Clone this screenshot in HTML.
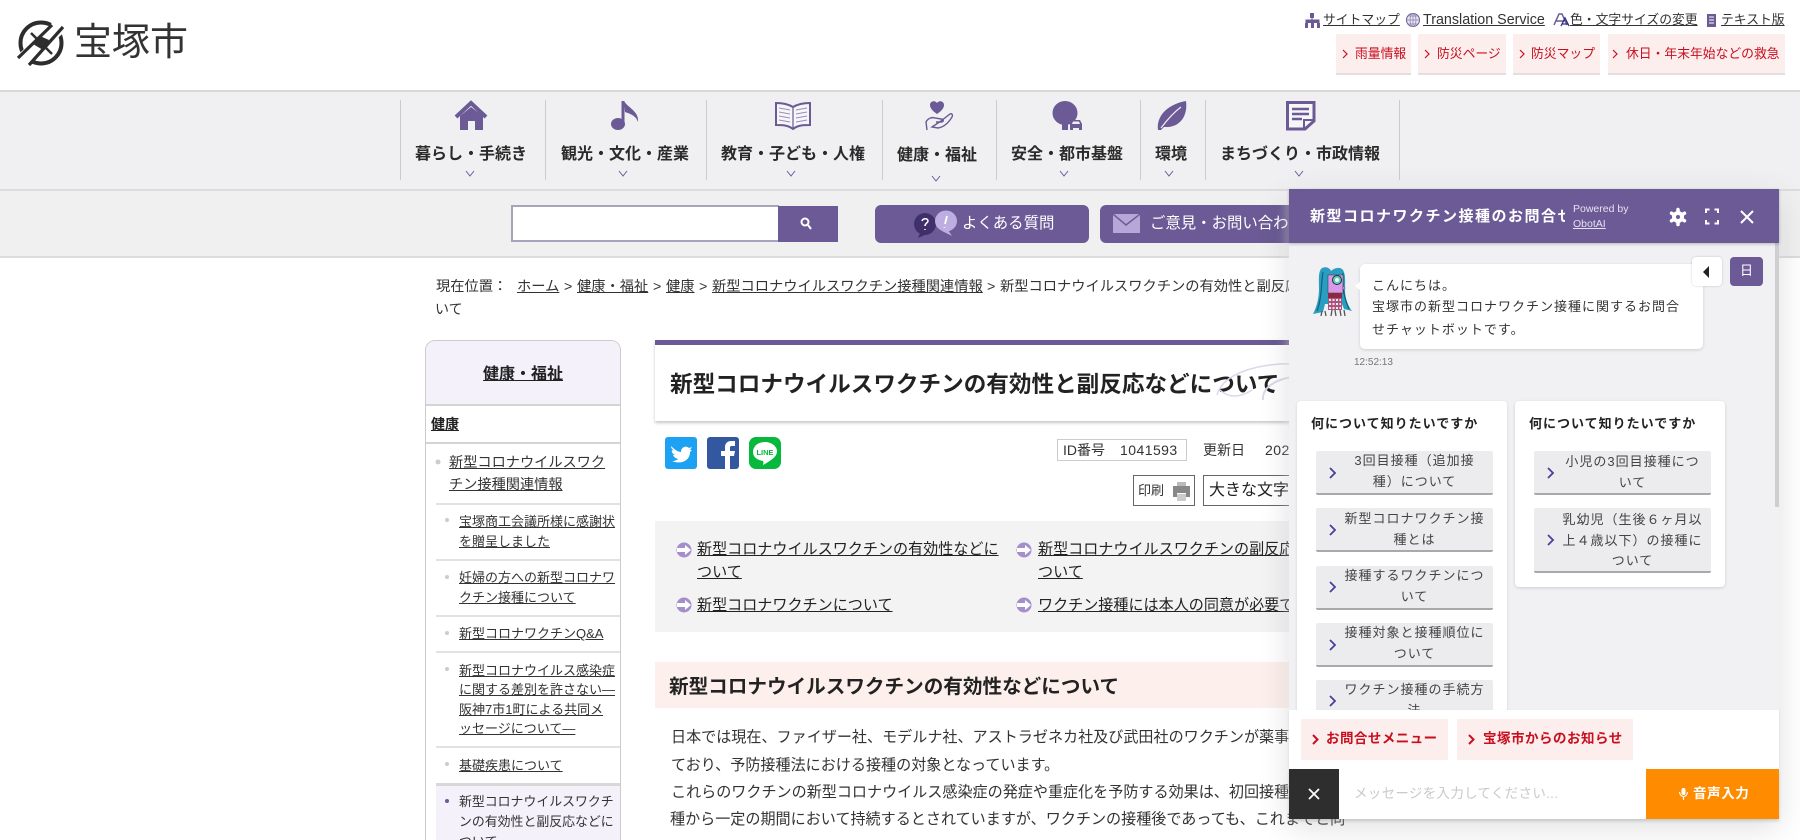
<!DOCTYPE html>
<html lang="ja"><head><meta charset="utf-8"><title>新型コロナウイルスワクチンの有効性と副反応などについて</title>
<style>
html,body{margin:0;padding:0;background:#fff}
#p{position:relative;width:1800px;height:840px;overflow:hidden;background:#fff;font-family:"Liberation Sans","Noto Sans CJK JP",sans-serif;color:#333}
#p div{position:absolute;box-sizing:border-box}
.t{position:absolute;white-space:nowrap;line-height:20px;height:20px}
a,.u{text-decoration:underline;color:inherit}
.nv{font-size:16px;font-weight:bold;color:#2a2a2a;transform:translateX(-50%)}
.rb{background:#fdeeee;border-bottom:2px solid #e4dede;top:34px;height:41px}
.rt{top:44px;font-size:12.8px;color:#c80f1e}
.tl{top:10px;font-size:12.8px;color:#333}
.s1{font-size:13px;color:#333}
.sep{background:#e2e2e2;height:2px;left:436px;width:184px}
.pb{font-size:15.08px;color:#333;left:671px}
.toc{font-size:15.08px;color:#222}
.bc{font-size:14.26px;top:277px}
.bt{background:#ececef;border-bottom:2px solid #a9a9ad;border-radius:2px}
.bx{position:absolute;text-align:center;font-size:13px;letter-spacing:1px;line-height:20.5px;width:147px;color:#444}
.hd{font-size:13px;font-weight:bold;letter-spacing:1px;color:#222;top:414px}
</style></head><body>
<div id="p">
<!-- header -->
<span class="t" style="left:74px;top:21px;font-size:38px;line-height:44px;height:44px;color:#333">宝塚市</span>
<span class="t tl u" style="left:1323px">サイトマップ</span>
<span class="t tl u" style="left:1423px;font-size:14.3px">Translation Service</span>
<span class="t tl u" style="left:1570px">色・文字サイズの変更</span>
<span class="t tl u" style="left:1721px">テキスト版</span>
<div class="rb" style="left:1336px;width:75px"></div>
<div class="rb" style="left:1418px;width:88px"></div>
<div class="rb" style="left:1513px;width:87px"></div>
<div class="rb" style="left:1608px;width:177px"></div>
<span class="t rt" style="left:1355px">雨量情報</span>
<span class="t rt" style="left:1437px">防災ページ</span>
<span class="t rt" style="left:1531px">防災マップ</span>
<span class="t rt" style="left:1626px">休日・年末年始などの救急</span>
<!-- nav -->
<div style="left:0;top:90px;width:1800px;height:101px;background:#f0f0f2;border-top:2px solid #d8d8d8;border-bottom:2px solid #dcdcdc"></div>
<div style="left:400px;top:100px;width:1px;height:80px;background:#ccc"></div>
<div style="left:545px;top:100px;width:1px;height:80px;background:#ccc"></div>
<div style="left:706px;top:100px;width:1px;height:80px;background:#ccc"></div>
<div style="left:882px;top:100px;width:1px;height:80px;background:#ccc"></div>
<div style="left:996px;top:100px;width:1px;height:80px;background:#ccc"></div>
<div style="left:1140px;top:100px;width:1px;height:80px;background:#ccc"></div>
<div style="left:1205px;top:100px;width:1px;height:80px;background:#ccc"></div>
<div style="left:1399px;top:100px;width:1px;height:80px;background:#ccc"></div>
<span class="t nv" style="left:471px;top:145px">暮らし・手続き</span>
<span class="t nv" style="left:625px;top:145px">観光・文化・産業</span>
<span class="t nv" style="left:793px;top:145px">教育・子ども・人権</span>
<span class="t nv" style="left:937px;top:146px">健康・福祉</span>
<span class="t nv" style="left:1067px;top:145px">安全・都市基盤</span>
<span class="t nv" style="left:1171px;top:145px">環境</span>
<span class="t nv" style="left:1300px;top:145px">まちづくり・市政情報</span>
<!-- search band -->
<div style="left:0;top:191px;width:1800px;height:67px;background:#f0f0f1;border-bottom:2px solid #dcdcdc"></div>
<div style="left:511px;top:205px;width:268px;height:37px;background:#fff;border:1px solid #a8a2bc;border-width:2px 0 2px 2px"></div>
<div style="left:778px;top:206px;width:60px;height:36px;background:#6b5a95"></div>
<div style="left:875px;top:205px;width:214px;height:38px;background:#6b5a95;border-radius:6px"></div>
<div style="left:1100px;top:205px;width:240px;height:38px;background:#6b5a95;border-radius:6px"></div>
<span class="t" style="left:962px;top:214px;font-size:15.4px;color:#fff">よくある質問</span>
<span class="t" style="left:1150px;top:214px;font-size:15.4px;color:#fff">ご意見・お問い合わせ</span>
<!-- breadcrumb -->
<span class="t bc" style="left:436px">現在位置：</span>
<span class="t u bc" style="left:517px">ホーム</span>
<span class="t bc" style="left:564px">&gt;</span>
<span class="t u bc" style="left:577px">健康・福祉</span>
<span class="t bc" style="left:653px">&gt;</span>
<span class="t u bc" style="left:666px">健康</span>
<span class="t bc" style="left:699px">&gt;</span>
<span class="t u bc" style="left:712px">新型コロナウイルスワクチン接種関連情報</span>
<span class="t bc" style="left:987px">&gt;</span>
<span class="t" style="left:1000px;top:277px;font-size:14.26px">新型コロナウイルスワクチンの有効性と副反応などについ</span>
<span class="t" style="left:435px;top:299px;font-size:14px">いて</span>
<!-- sidebar -->
<div style="left:425px;top:340px;width:196px;height:520px;border:1px solid #ccc;border-radius:10px 10px 0 0;background:#fff"></div>
<div style="left:426px;top:341px;width:194px;height:65px;background:#f4f1fb;border-radius:9px 9px 0 0;border-bottom:2px solid #d4d4d4"></div>
<span class="t u" style="left:483px;top:365px;font-size:16px;font-weight:bold;color:#222">健康・福祉</span>
<span class="t u" style="left:431px;top:414px;font-size:14px;font-weight:bold;color:#222">健康</span>
<div style="left:426px;top:442px;width:194px;height:2px;background:#d4d4d4"></div>
<span class="t u" style="left:449px;top:453px;font-size:14.2px">新型コロナウイルスワク</span>
<span class="t u" style="left:449px;top:475px;font-size:14.2px">チン接種関連情報</span>
<div class="sep" style="top:503px"></div>
<span class="t u s1" style="left:459px;top:512px">宝塚商工会議所様に感謝状</span>
<span class="t u s1" style="left:459px;top:532px">を贈呈しました</span>
<div class="sep" style="top:559px"></div>
<span class="t u s1" style="left:459px;top:568px">妊婦の方への新型コロナワ</span>
<span class="t u s1" style="left:459px;top:588px">クチン接種について</span>
<div class="sep" style="top:615px"></div>
<span class="t u s1" style="left:459px;top:624px">新型コロナワクチンQ&amp;A</span>
<div class="sep" style="top:651px"></div>
<span class="t u s1" style="left:459px;top:661px">新型コロナウイルス感染症</span>
<span class="t u s1" style="left:459px;top:680px">に関する差別を許さない―</span>
<span class="t u s1" style="left:459px;top:700px">阪神7市1町による共同メ</span>
<span class="t u s1" style="left:459px;top:719px">ッセージについて―</span>
<div class="sep" style="top:746px"></div>
<span class="t u s1" style="left:459px;top:756px">基礎疾患について</span>
<div class="sep" style="top:783px;height:3px;background:#d8d8d8"></div>
<div style="left:436px;top:786px;width:184px;height:60px;background:#f4f1fb"></div>
<span class="t s1" style="left:459px;top:792px;font-size:12.9px">新型コロナウイルスワクチ</span>
<span class="t s1" style="left:459px;top:812px;font-size:12.9px">ンの有効性と副反応などに</span>
<span class="t s1" style="left:459px;top:832px">ついて</span>
<!-- main title -->
<div style="left:655px;top:340px;width:650px;height:81px;background:#fff;border-top:5px solid #6b5a95;box-shadow:0 2px 3px rgba(0,0,0,.22)"></div>
<span class="t" style="left:670px;top:369px;font-size:22.6px;line-height:32px;height:32px;font-weight:bold;color:#222">新型コロナウイルスワクチンの有効性と副反応などについて</span>
<!-- meta -->
<div style="left:1057px;top:439px;width:130px;height:22px;border:1px solid #ccc"></div>
<span class="t" style="left:1063px;top:440px;font-size:14px">ID番号</span>
<span class="t" style="left:1120px;top:440px;font-size:14px;letter-spacing:.45px">1041593</span>
<span class="t" style="left:1203px;top:440px;font-size:14px">更新日</span>
<span class="t" style="left:1265px;top:440px;font-size:14px;letter-spacing:.45px">2022年</span>
<div style="left:1133px;top:475px;width:62px;height:31px;border:1px solid #666"></div>
<span class="t" style="left:1138px;top:481px;font-size:13px">印刷</span>
<div style="left:1203px;top:475px;width:120px;height:31px;border:1px solid #666"></div>
<span class="t" style="left:1209px;top:481px;font-size:16px;color:#222">大きな文字</span>
<!-- toc -->
<div style="left:655px;top:521px;width:650px;height:111px;background:#f3f3f4"></div>
<span class="t u toc" style="left:697px;top:540px">新型コロナウイルスワクチンの有効性などに</span>
<span class="t u toc" style="left:697px;top:563px">ついて</span>
<span class="t u toc" style="left:697px;top:596px">新型コロナワクチンについて</span>
<span class="t u toc" style="left:1038px;top:540px">新型コロナウイルスワクチンの副反応などに</span>
<span class="t u toc" style="left:1038px;top:563px">ついて</span>
<span class="t u toc" style="left:1038px;top:596px">ワクチン接種には本人の同意が必要です</span>
<!-- h2 -->
<div style="left:655px;top:662px;width:650px;height:46px;background:#fdf0ec"></div>
<span class="t" style="left:669px;top:674px;font-size:19.6px;line-height:26px;height:26px;font-weight:bold;color:#222">新型コロナウイルスワクチンの有効性などについて</span>
<span class="t pb" style="top:728px">日本では現在、ファイザー社、モデルナ社、アストラゼネカ社及び武田社のワクチンが薬事承認され</span>
<span class="t pb" style="top:756px">ており、予防接種法における接種の対象となっています。</span>
<span class="t pb" style="top:783px">これらのワクチンの新型コロナウイルス感染症の発症や重症化を予防する効果は、初回接種後及び追加接</span>
<span class="t pb" style="top:810px;left:670px">種から一定の期間において持続するとされていますが、ワクチンの接種後であっても、これまでと同</span>

<!-- page icons -->
<svg style="position:absolute;left:0;top:0" width="1800" height="840" viewBox="0 0 1800 840" fill="none">
<!-- logo -->
<circle cx="41" cy="43" r="20.500" stroke="#2d2d2d" stroke-width="4"/>
<path d="M20 63 L63 23" stroke="#fff" stroke-width="15"/>
<path d="M18 58 L52 25 M29 65 L63 27" stroke="#2d2d2d" stroke-width="3.200"/>
<path d="M31 33 L52 54" stroke="#2d2d2d" stroke-width="2.500"/>
<path d="M33 44 L40 36 L49 40 L43 50 Z" fill="#2d2d2d"/>
<!-- home -->
<path d="M456 117 L471 103 L486 117" stroke="#6b5a95" stroke-width="4"/>
<path d="M460 116 L471 107 L483 116 L483 130 L475 130 L475 121 L468 121 L468 130 L460 130Z" fill="#6b5a95"/>
<!-- note -->
<ellipse cx="618" cy="124" rx="7" ry="6" fill="#6b5a95"/><path d="M623 124 V101" stroke="#6b5a95" stroke-width="3"/>
<path d="M624 101 C628 108 639 111 638 122 C636 116 631 114 625 112Z" fill="#6b5a95"/>
<!-- book -->
<path d="M776 103 C782 103 788 104 793 107 C798 104 804 103 810 103 V125 C804 125 798 125 793 129 C788 125 782 125 776 125Z" stroke="#6b5a95" stroke-width="2" fill="#f6f6f8"/>
<path d="M793 107 V128" stroke="#6b5a95" stroke-width="1.200"/>
<path d="M779 108 L790 110 M779 112 L790 114 M779 116 L790 118 M779 120 L790 122 M796 110 L807 108 M796 114 L807 112 M796 118 L807 116 M796 122 L807 120" stroke="#9a8db8" stroke-width="1.100"/>
<!-- health -->
<path d="M937 114 C931 110 930 107 930 105 C930 101 935 100 937 103 C939 100 944 101 944 105 C944 107 943 110 937 114Z" fill="#6b5a95"/>
<path d="M927 130 L926 122 C928 118 932 117 935 118 L941 119 C944 119 944 122 941 122 L936 122 M941 121 L950 114 C952 113 953 115 952 117 C949 122 945 127 938 128 L932 127 Z" stroke="#6b5a95" stroke-width="1.400" fill="none"/>
<!-- tree -->
<ellipse cx="1065" cy="113" rx="12.500" ry="12" fill="#6b5a95"/><path d="M1062 120 H1068 V130 H1062Z" fill="#6b5a95"/>
<path d="M1070 130 V124 L1072 120 H1080 L1082 124 V130 H1079 V128 H1073 V130Z" fill="#6b5a95"/><path d="M1073 121.500 H1079 L1080 124 H1072Z" fill="#f0f0f2"/>
<!-- leaf -->
<path d="M1158 130 C1156 116 1168 104 1186 101 C1188 116 1180 128 1164 127 L1161 130Z" fill="#6b5a95"/>
<path d="M1161 128 C1167 120 1173 113 1181 107" stroke="#f0f0f2" stroke-width="1.200"/>
<!-- doc -->
<path d="M1287.500 102.500 H1314 V121 L1305 129 H1287.500Z" stroke="#6b5a95" stroke-width="3" fill="#f6f6f8"/>
<path d="M1304 129 V120 H1314" stroke="#6b5a95" stroke-width="2"/>
<path d="M1292 109 H1309 M1292 114 H1309 M1292 119 H1302" stroke="#6b5a95" stroke-width="2.500"/>
<!-- nav chevrons -->
<g stroke="#6b5a95" stroke-width="1"><path d="M466 171 L470 176 L474 171"/><path d="M619 171 L623 176 L627 171"/><path d="M787 171 L791 176 L795 171"/><path d="M932 176 L936 181 L940 176"/><path d="M1060 171 L1064 176 L1068 171"/><path d="M1165 171 L1169 176 L1173 171"/><path d="M1295 171 L1299 176 L1303 171"/></g>
<!-- top link icons -->
<g fill="#6b5a95"><rect x="1310" y="13" width="4" height="5"/><rect x="1305" y="23" width="3" height="5"/><rect x="1311" y="23" width="3" height="5"/><rect x="1317" y="23" width="3" height="5"/><path d="M1306 23 V20 H1319 V23 M1312 18 V23" stroke="#6b5a95"/></g>
<circle cx="1413" cy="20" r="6.500" stroke="#6b5a95" fill="#e8e6f0"/><path d="M1407 20 H1420 M1413 14 V27 M1408 16 H1418 M1408 24 H1418" stroke="#8a7cad" stroke-width=".7"/><ellipse cx="1413" cy="20" rx="3" ry="6.500" stroke="#8a7cad" stroke-width=".7"/>
<path d="M1554 25 L1559 14 L1562 14 L1567 25 M1556 21 L1565 21" stroke="#6b5a95" stroke-width="1.500"/><path d="M1561 26 L1565 18 L1569 26 M1562.500 24 H1567.500" stroke="#33307a" stroke-width="1.300"/>
<path d="M1707 14 H1716 V27 H1707Z" fill="#6b5a95"/><path d="M1709 17 H1714 M1709 20 H1714 M1709 23 H1714" stroke="#fff"/>
<!-- red chevrons -->
<g stroke="#c80f1e" stroke-width="1.200"><path d="M1343 50 L1347 54 L1343 58"/><path d="M1425 50 L1429 54 L1425 58"/><path d="M1520 50 L1524 54 L1520 58"/><path d="M1613 50 L1617 54 L1613 58"/></g>
<!-- search -->
<circle cx="805" cy="222" r="3.500" stroke="#fff" stroke-width="2"/><path d="M808 225 L811 229" stroke="#fff" stroke-width="2"/>
<!-- faq -->
<circle cx="925" cy="224" r="11" fill="#3f2f6b"/><path d="M920 233 L918 238 L925 235Z" fill="#3f2f6b"/>
<ellipse cx="946" cy="221" rx="11" ry="10.500" fill="#bcaee0"/><path d="M948 230 L952 236 L942 231Z" fill="#bcaee0"/>
<path d="M947 216 L945 224 M944.500 227 V227.800" stroke="#fff" stroke-width="1.800"/>
<path d="M922 221 C923 218 928 218 928 221 C928 223 925 223 925 226 M925 229 V230" stroke="#fff" stroke-width="1.500"/>
<!-- mail -->
<path d="M1113 215 L1126 226 L1140 215 V233 H1113Z" fill="#b7a7d8"/><path d="M1114 214 H1139 L1126 224Z" fill="#b7a7d8"/>
<!-- title swirl -->
<path d="M1217 395 C1222 375 1255 362 1300 364" stroke="#dcd8ec" stroke-width="1.500"/>
<path d="M1220 390 C1228 398 1240 398 1252 390" stroke="#dcd8ec" stroke-width="1.500"/>
<path d="M1263 400 C1262 388 1275 378 1300 376" stroke="#dcd8ec" stroke-width="2"/>
<!-- print -->
<path d="M1177 482 H1186 V486 H1177Z" fill="#bbb"/><path d="M1173 486 H1190 V497 H1186 V493 H1177 V497 H1173Z" fill="#888"/><path d="M1177 494 H1186 V501 H1177Z" fill="#ccc"/>
<!-- side bullets -->
<g fill="#ccc"><circle cx="438" cy="462" r="2.500"/><circle cx="447" cy="520" r="2"/><circle cx="447" cy="577" r="2"/><circle cx="447" cy="633" r="2"/><circle cx="447" cy="669" r="2"/><circle cx="447" cy="764" r="2"/></g>
<circle cx="447" cy="801" r="2" fill="#6b5a95"/>
<!-- social -->
<rect x="665" y="437" width="32" height="32" rx="3" fill="#1da1f2"/>
<path d="M671 446 C675 450 678 452 681 452 C681 447 686 445 689 448 L692 447 L690 450 L692 450 L690 452 C690 460 682 465 672 461 C675 461 677 460 678 459 C675 458 674 457 673 455 L675 455 C673 454 671 452 672 450 L674 451 C672 449 671 448 671 446Z" fill="#fff"/>
<rect x="707" y="437" width="32" height="32" rx="3" fill="#33589f"/>
<path d="M725 469 V456 H721 V451 H725 V447 C725 443 728 441 731 441 H735 V446 H732 C730 446 730 447 730 448 V451 H735 L734 456 H730 V469Z" fill="#fff"/>
<rect x="749" y="437" width="32" height="32" rx="7" fill="#06b83b"/>
<path d="M765 442 C757 442 753 447 753 452 C753 457 757 460 763 461 C764 462 763 464 763 465 C765 464 774 459 776 455 C777 453 777 452 777 451 C777 446 771 442 765 442Z" fill="#fff"/>
<text x="765" y="455" font-size="7.500" font-weight="bold" fill="#06b83b" text-anchor="middle" font-family="Liberation Sans">LINE</text>
<!-- toc icons -->
<g><circle cx="684" cy="550" r="7.500" fill="#a58fcb"/><circle cx="684" cy="605" r="7.500" fill="#a58fcb"/><circle cx="1024" cy="550" r="7.500" fill="#a58fcb"/><circle cx="1024" cy="605" r="7.500" fill="#a58fcb"/></g>
<g fill="#fff"><path d="M677 548 H685 V545 L691 550 L685 555 V552 H677Z"/><path d="M677 603 H685 V600 L691 605 L685 610 V607 H677Z"/><path d="M1017 548 H1025 V545 L1031 550 L1025 555 V552 H1017Z"/><path d="M1017 603 H1025 V600 L1031 605 L1025 610 V607 H1017Z"/></g>
</svg>

<!-- CHAT PANEL -->
<div style="left:1289px;top:189px;width:490px;height:630px;box-shadow:0 8px 30px rgba(0,0,0,.13),0 0 12px rgba(255,255,255,.6);background:#f1f1f4;z-index:4"></div>
<div style="left:0;top:0;width:1800px;height:840px;z-index:5">
<div style="left:1775px;top:243px;width:4px;height:264px;background:#cfcfd2"></div>
<!-- bubble -->
<div style="left:1360px;top:264px;width:343px;height:85px;background:#fff;border-radius:5px;box-shadow:0 1px 3px rgba(0,0,0,.15)"></div>
<span class="t" style="left:1372px;top:276px;font-size:13px;letter-spacing:1px;color:#333">こんにちは。</span>
<span class="t" style="left:1372px;top:297px;font-size:13px;letter-spacing:1px;color:#333">宝塚市の新型コロナワクチン接種に関するお問合</span>
<span class="t" style="left:1372px;top:320px;font-size:13px;letter-spacing:1px;color:#333">せチャットボットです。</span>
<span class="t" style="left:1354px;top:353px;font-size:10px;color:#777">12:52:13</span>
<div style="left:1692px;top:257px;width:30px;height:29px;background:#fff;border-radius:4px;box-shadow:0 0 2px rgba(0,0,0,.2)"></div>
<div style="left:1730px;top:257px;width:33px;height:29px;background:#6b5a95;border-radius:4px"></div>
<span class="t" style="left:1740px;top:261px;font-size:13px;color:#fff">日</span>
<!-- cards -->
<div style="left:1297px;top:401px;width:210px;height:320px;background:#fff;border-radius:4px;box-shadow:0 1px 3px rgba(0,0,0,.12)"></div>
<div style="left:1515px;top:401px;width:210px;height:186px;background:#fff;border-radius:4px;box-shadow:0 1px 3px rgba(0,0,0,.15)"></div>
<span class="t hd" style="left:1311px">何について知りたいですか</span>
<span class="t hd" style="left:1529px">何について知りたいですか</span>
<div class="bt" style="left:1316px;top:451px;width:177px;height:44px"></div>
<div class="bt" style="left:1316px;top:508px;width:177px;height:44px"></div>
<div class="bt" style="left:1316px;top:566px;width:177px;height:44px"></div>
<div class="bt" style="left:1316px;top:623px;width:177px;height:44px"></div>
<div class="bt" style="left:1316px;top:680px;width:177px;height:44px"></div>
<div class="bt" style="left:1534px;top:451px;width:177px;height:44px"></div>
<div class="bt" style="left:1534px;top:508px;width:177px;height:65px"></div>
<span class="bx" style="left:1341px;top:451px">3回目接種（追加接<br>種）について</span>
<span class="bx" style="left:1341px;top:509px">新型コロナワクチン接<br>種とは</span>
<span class="bx" style="left:1341px;top:566px">接種するワクチンにつ<br>いて</span>
<span class="bx" style="left:1341px;top:623px">接種対象と接種順位に<br>ついて</span>
<span class="bx" style="left:1341px;top:680px">ワクチン接種の手続方<br>法</span>
<span class="bx" style="left:1559px;top:452px">小児の3回目接種につ<br>いて</span>
<span class="bx" style="left:1559px;top:510px">乳幼児（生後６ヶ月以<br>上４歳以下）の接種に<br>ついて</span>
<!-- footer -->
<div style="left:1289px;top:710px;width:490px;height:59px;background:#fff;box-shadow:0 1px 2px rgba(0,0,0,.1)"></div>
<div style="left:1301px;top:719px;width:147px;height:41px;background:#fdeeee"></div>
<div style="left:1457px;top:719px;width:176px;height:41px;background:#fdeeee"></div>
<span class="t" style="left:1326px;top:729px;font-size:13.500px;font-weight:bold;letter-spacing:.45px;color:#c80f1e">お問合せメニュー</span>
<span class="t" style="left:1483px;top:729px;font-size:13.500px;font-weight:bold;letter-spacing:.5px;color:#c80f1e">宝塚市からのお知らせ</span>
<div style="left:1289px;top:769px;width:490px;height:50px;background:#fff;box-shadow:0 2px 3px rgba(0,0,0,.15)"></div>
<div style="left:1289px;top:769px;width:50px;height:50px;background:#2e2e2e"></div>
<div style="left:1646px;top:769px;width:133px;height:50px;background:#ff8c00"></div>
<span class="t" style="left:1354px;top:784px;font-size:13.500px;letter-spacing:.3px;color:#c9c9c9">メッセージを入力してください...</span>
<span class="t" style="left:1693px;top:784px;font-size:13.500px;letter-spacing:.6px;font-weight:bold;color:#fff">音声入力</span>
<!-- header -->
<div style="left:1289px;top:189px;width:490px;height:54px;background:#6b5a95;box-shadow:0 1px 3px rgba(0,0,0,.25)"></div>
<div style="left:1310px;top:205px;width:255px;height:24px;overflow:hidden"><span class="t" style="left:0;top:2px;font-size:15px;font-weight:bold;letter-spacing:1.500px;color:#fff">新型コロナワクチン接種のお問合せチャットボット</span></div>
<span class="t" style="left:1573px;top:199px;font-size:10.500px;color:#e6e2f0">Powered by</span>
<span class="t u" style="left:1573px;top:214px;font-size:10.500px;color:#e6e2f0">ObotAI</span>
<svg style="position:absolute;left:0;top:0" width="1800" height="840" viewBox="0 0 1800 840" fill="none">
<path d="M1678 209.500 V224.500 M1671.500 213.250 L1684.500 220.750 M1684.500 213.250 L1671.500 220.750" stroke="#fff" stroke-width="3.500" stroke-linecap="round"/>
<circle cx="1678" cy="217" r="4.500" stroke="#fff" stroke-width="3"/><circle cx="1678" cy="217" r="2" fill="#6b5a95"/>
<path d="M1706 213 V209.500 H1709.500 M1714.500 209.500 H1718 V213 M1718 220 V223.500 H1714.500 M1709.500 223.500 H1706 V220" stroke="#fff" stroke-width="2"/>
<path d="M1741 211 L1753 223 M1753 211 L1741 223" stroke="#fff" stroke-width="2"/>
<path d="M1709 266 V278 L1703 272Z" fill="#222"/>
<path d="M1360 282 L1355 286 L1360 290Z" fill="#fff"/>
<!-- avatar -->
<path d="M1322 268 C1326 266 1330 268 1331 271 C1335 267 1341 267 1343 270 C1346 275 1345 283 1345 290 C1345 298 1348 306 1352 311 L1344 309 L1342 304 L1325 304 L1323 312 L1313 314 C1317 306 1319 298 1319 288 C1319 280 1318 271 1322 268Z" fill="#2a9ec0"/>
<path d="M1323 272 C1321 284 1322 298 1317 311 M1343 273 C1342 286 1344 298 1349 309" stroke="#14607e" stroke-width="1.200"/>
<rect x="1328" y="275" width="15" height="18" fill="#d89ae8" stroke="#333" stroke-width=".5"/>
<circle cx="1337" cy="280" r="4.500" fill="#6ec8b0" stroke="#134" stroke-width="1"/><circle cx="1337" cy="280" r="2" fill="#dff"/>
<path d="M1343 286 L1345.500 288 L1343 290Z" fill="#d89ae8" stroke="#333" stroke-width=".4"/>
<rect x="1328" y="293" width="14" height="5" fill="#8a2a44"/>
<rect x="1328" y="298" width="14" height="12" fill="#a8567c"/>
<path d="M1329 300 H1341 M1329 304 H1341 M1329 308 H1341" stroke="#f8e4ee" stroke-width="2" stroke-dasharray="2 1.500"/>
<path d="M1322 311 L1321 316 M1325 311 L1326 316 M1332 310 L1331 316 M1335 310 L1336 316 M1340 310 L1341 316 M1344 310 L1345 316" stroke="#555" stroke-width="1.300"/>
<!-- card chevrons -->
<g stroke="#46409a" stroke-width="1.800"><path d="M1330 468 L1335 473 L1330 478"/><path d="M1330 525 L1335 530 L1330 535"/><path d="M1330 582 L1335 587 L1330 592"/><path d="M1330 640 L1335 645 L1330 650"/><path d="M1330 696 L1335 701 L1330 706"/><path d="M1548 468 L1553 473 L1548 478"/><path d="M1548 535 L1553 540 L1548 545"/></g>
<path d="M1313 735 L1317.500 739.500 L1313 744 M1469 735 L1473.500 739.500 L1469 744" stroke="#c80f1e" stroke-width="2"/>
<path d="M1309 789 L1319 799 M1319 789 L1309 799" stroke="#fff" stroke-width="1.800"/>
<rect x="1681.500" y="788" width="4" height="7" rx="2" fill="#fff"/><path d="M1679.500 792 C1680 798 1687 798 1687.500 792 M1683.500 797 V800" stroke="#fff" stroke-width="1.100"/>
</svg>
</div>
</div>
</body></html>
